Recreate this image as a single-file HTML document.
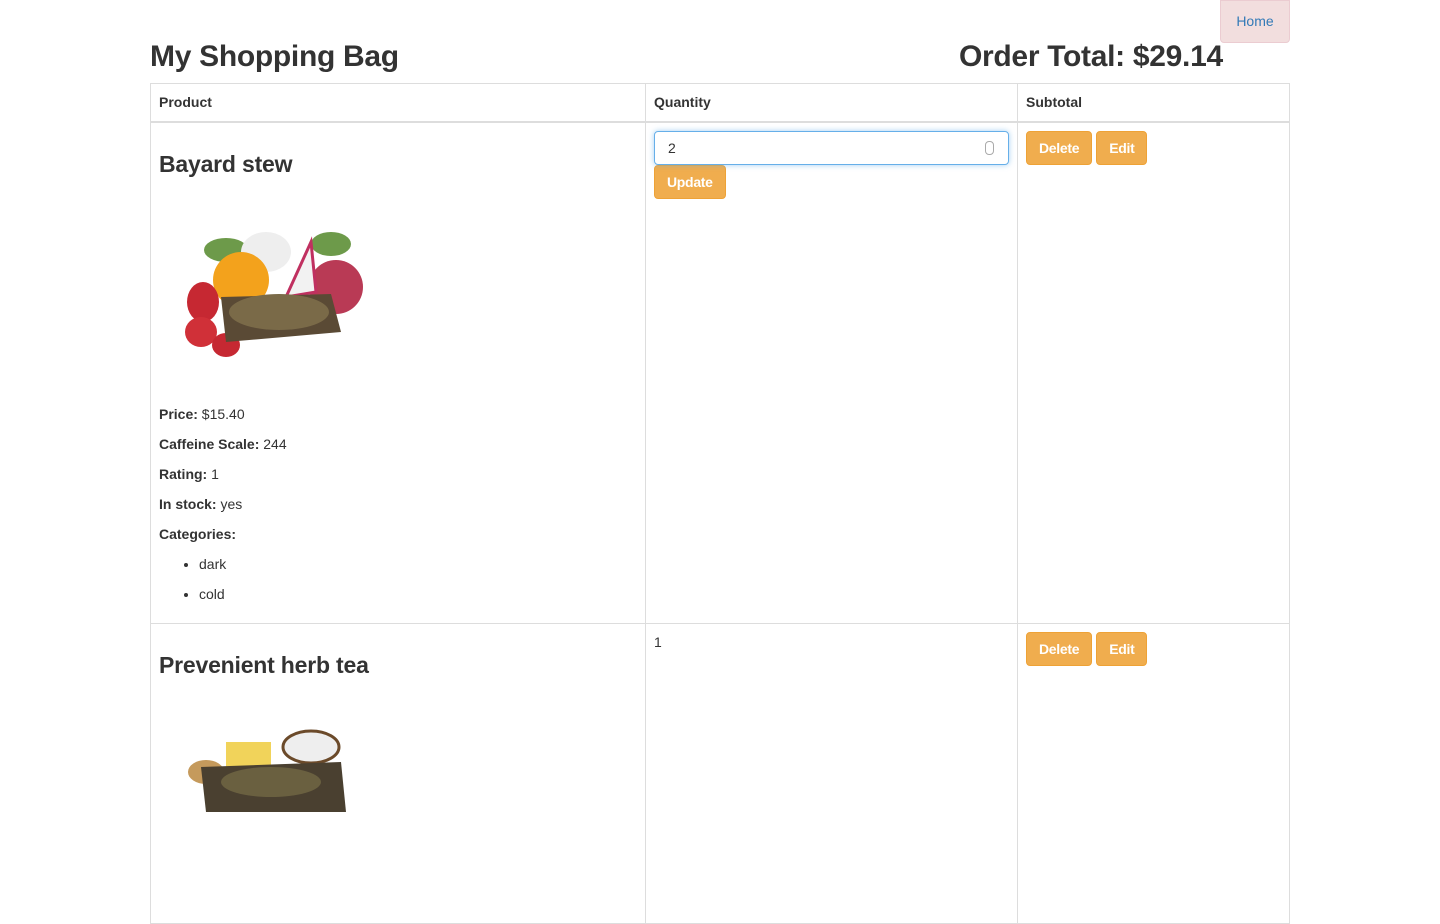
<!DOCTYPE html>
<html><head><meta charset="utf-8"><style>
*{box-sizing:border-box}
body{margin:0;width:1440px;height:828px;overflow:hidden;background:#fff;font-family:"Liberation Sans",Helvetica,Arial,sans-serif;color:#333;font-size:14px;position:relative}
.home{position:absolute;left:1220px;top:0;width:70px;height:43px;background:#f2dede;border:1px solid #ebccd1;border-radius:0 0 4px 4px;color:#337ab7;font-size:14px;text-align:center;line-height:40px}
h1{position:absolute;margin:0;font-size:30px;font-weight:bold;top:39px;line-height:36px;letter-spacing:-0.3px}
table{position:absolute;left:150px;top:83px;width:1140px;border-collapse:collapse}
td,th{border:1px solid #ddd;vertical-align:top;text-align:left;padding:8px}
th{height:38px;font-size:14px;border-bottom:2px solid #ddd;padding-top:10px}
h2{font-size:23px;font-weight:bold;margin:20px 0 10px;line-height:26px;letter-spacing:-0.2px}
p{margin:0 0 10px;line-height:20px}
ul{margin:0;padding-left:40px}li{line-height:20px;margin-bottom:10px}
.btn{display:inline-block;background:#f0ad4e;border:1px solid #eea236;color:#fff;border-radius:4px;padding:0 12px;height:34px;line-height:32px;font-size:14px;font-weight:bold;margin-right:4px;letter-spacing:-0.3px}
.inp{width:355px;height:34px;border:1px solid #66afe9;border-radius:4px;box-shadow:0 0 6px rgba(102,175,233,.6);padding:6px 13px;line-height:20px;position:relative}
</style></head><body>
<div class="home">Home</div>
<h1 style="left:150px">My Shopping Bag</h1>
<h1 style="left:959px">Order Total: $29.14</h1>
<table>
<tr><th style="width:495px">Product</th><th style="width:372px">Quantity</th><th>Subtotal</th></tr>
<tr style="height:502px"><td>
<h2>Bayard stew</h2>
<svg width="230" height="200" style="display:block;margin:0 0 17px -8px" viewBox="0 0 230 170">
<ellipse cx="75" cy="48" rx="22" ry="12" fill="#6d9a4a"/><ellipse cx="180" cy="42" rx="20" ry="12" fill="#6d9a4a"/>
<ellipse cx="115" cy="50" rx="25" ry="20" fill="#eee"/>
<circle cx="90" cy="78" r="28" fill="#f3a21c"/><circle cx="185" cy="85" r="27" fill="#b93a55"/>
<path d="M135 95 L160 40 L165 90Z" fill="#f2f2f2" stroke="#c03060" stroke-width="3"/>
<ellipse cx="52" cy="100" rx="16" ry="20" fill="#c62832"/><ellipse cx="50" cy="130" rx="16" ry="15" fill="#d03038"/><ellipse cx="75" cy="143" rx="14" ry="12" fill="#c62832"/>
<path d="M70 95 L180 92 L190 130 L75 140Z" fill="#5a4a35"/><ellipse cx="128" cy="110" rx="50" ry="18" fill="#7a6a48"/>
</svg>
<p><b>Price:</b> $15.40</p><p><b>Caffeine Scale:</b> 244</p><p><b>Rating:</b> 1</p><p><b>In stock:</b> yes</p><p><b>Categories:</b></p>
<ul><li>dark</li><li>cold</li></ul>
</td><td>
<div class="inp">2<span style="position:absolute;right:14px;top:9px;width:9px;height:14px;border:1px solid #aaa;border-radius:4px"></span></div>
<div class="btn">Update</div>
</td><td><span class="btn">Delete</span><span class="btn">Edit</span></td></tr>
<tr style="height:300px"><td>
<h2>Prevenient herb tea</h2>
<svg width="230" height="170" style="display:block;margin:24px 0 0 -8px" viewBox="0 0 230 170">
<rect x="75" y="40" width="45" height="30" fill="#f1d35a"/><ellipse cx="160" cy="45" rx="28" ry="16" fill="#eee" stroke="#6b4a2a" stroke-width="3"/>
<ellipse cx="55" cy="70" rx="18" ry="12" fill="#c59a5c"/><path d="M50 65 L190 60 L195 110 L55 110Z" fill="#4a4030"/><ellipse cx="120" cy="80" rx="50" ry="15" fill="#6a6040"/>
</svg>
</td><td style="padding-top:10px">1</td><td><span class="btn">Delete</span><span class="btn">Edit</span></td></tr>
</table>
</body></html>
